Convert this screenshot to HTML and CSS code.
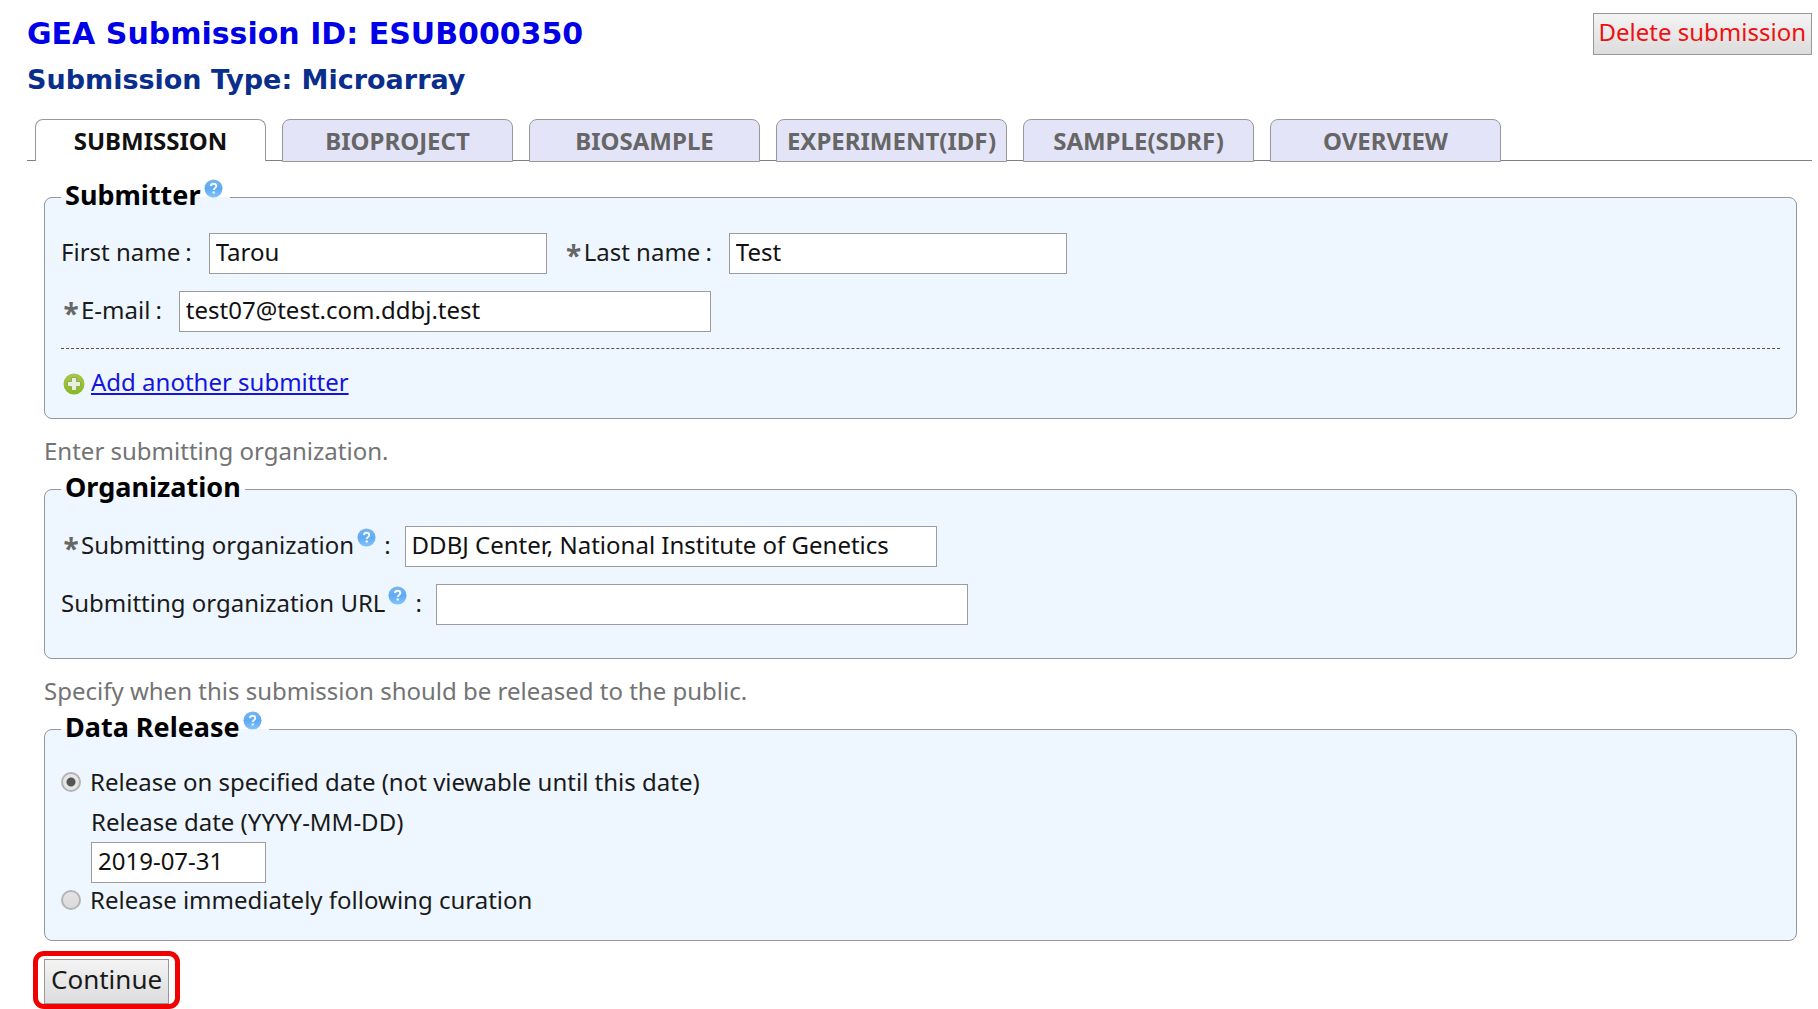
FILE: index.html
```html
<!DOCTYPE html>
<html lang="en">
<head>
<meta charset="utf-8">
<title>GEA Submission ESUB000350</title>
<link rel="stylesheet" href="styles.css">
</head>
<body>
<svg class="defs" width="0" height="0" aria-hidden="true">
  <defs>
    <linearGradient id="help-fill" x1="0" y1="0" x2="0" y2="1">
      <stop offset="0" stop-color="#7ab4ee"/>
      <stop offset="0.5" stop-color="#5faaf3"/>
      <stop offset="1" stop-color="#82c4fc"/>
    </linearGradient>
    <linearGradient id="add-fill" x1="0" y1="0" x2="0" y2="1">
      <stop offset="0" stop-color="#a9c552"/>
      <stop offset="1" stop-color="#86b91f"/>
    </linearGradient>
    <symbol id="icon-help" viewBox="0 0 20 20">
      <circle cx="10" cy="10" r="9.5" fill="url(#help-fill)"/>
      <path d="M7.2 7.6C7.4 5.8 8.5 5 10 5c1.700 0 2.900 1 2.900 2.500 0 1.900-2.700 2.300-2.700 4.200" fill="none" stroke="#f4faff" stroke-width="2"/>
      <circle cx="10.200" cy="14.300" r="1.300" fill="#f4faff"/>
    </symbol>
    <symbol id="icon-add" viewBox="0 0 22 22">
      <circle cx="11" cy="11" r="10.500" fill="url(#add-fill)"/>
      <path d="M8.500 4.500h5v4h4v5h-4v4h-5v-4h-4v-5h4z" fill="#e9efe0" stroke="#8fae4a" stroke-width="1"/>
    </symbol>
  </defs>
</svg>

<header class="page-header">
  <div>
    <h1 class="submission-id">GEA Submission ID: ESUB000350</h1>
    <h2 class="submission-type">Submission Type: Microarray</h2>
  </div>
  <button type="button" class="button button-delete">Delete submission</button>
</header>

<nav class="tabs">
  <a class="tab tab-active" href="#submission">SUBMISSION</a>
  <a class="tab" href="#bioproject">BIOPROJECT</a>
  <a class="tab" href="#biosample">BIOSAMPLE</a>
  <a class="tab" href="#experiment">EXPERIMENT(IDF)</a>
  <a class="tab" href="#sample">SAMPLE(SDRF)</a>
  <a class="tab" href="#overview">OVERVIEW</a>
</nav>

<form class="form">
  <fieldset class="panel">
    <legend class="panel-title">Submitter<svg class="help help-title"><use href="#icon-help"/></svg></legend>
    <div class="rows">
      <div class="row">
        <label class="label" for="first-name">First name<span class="colon">:</span></label>
        <input class="field field-name" id="first-name" type="text" value="Tarou">
        <label class="label label-next" for="last-name"><span class="required">*</span>Last name<span class="colon">:</span></label>
        <input class="field field-name" id="last-name" type="text" value="Test">
      </div>
      <div class="row">
        <label class="label" for="email"><span class="required">*</span>E-mail<span class="colon">:</span></label>
        <input class="field field-long" id="email" type="text" value="test07@test.com.ddbj.test">
      </div>
    </div>
    <div class="add-row">
      <svg class="add-icon" aria-hidden="true"><use href="#icon-add"/></svg>
      <a class="add-link" href="#add">Add another submitter</a>
    </div>
  </fieldset>

  <p class="hint">Enter submitting organization.</p>
  <fieldset class="panel">
    <legend class="panel-title">Organization</legend>
    <div class="rows rows-organization">
      <div class="row">
        <label class="label label-help" for="organization"><span class="required">*</span>Submitting organization<svg class="help"><use href="#icon-help"/></svg><span class="colon colon-wide">:</span></label>
        <input class="field field-long" id="organization" type="text" value="DDBJ Center, National Institute of Genetics">
      </div>
      <div class="row">
        <label class="label label-help" for="organization-url">Submitting organization URL<svg class="help"><use href="#icon-help"/></svg><span class="colon colon-wide">:</span></label>
        <input class="field field-long" id="organization-url" type="text">
      </div>
    </div>
  </fieldset>

  <p class="hint">Specify when this submission should be released to the public.</p>
  <fieldset class="panel">
    <legend class="panel-title">Data Release<svg class="help help-title"><use href="#icon-help"/></svg></legend>
    <div class="release">
      <label class="choice"><input class="radio" type="radio" name="release" checked>Release on specified date (not viewable until this date)</label>
      <div class="release-date">
        <label for="release-date">Release date (YYYY-MM-DD)</label>
        <input class="field field-date" id="release-date" type="text" value="2019-07-31">
      </div>
      <label class="choice"><input class="radio" type="radio" name="release">Release immediately following curation</label>
    </div>
  </fieldset>

  <div class="highlight">
    <button type="submit" class="button button-continue">Continue</button>
  </div>
</form>
</body>
</html>
```

FILE: styles.css
```css
* {
  box-sizing: border-box;
}

body {
  margin: 0;
  padding: 13px 6px 0 27px;
  background: #fff;
  color: #1a1a1a;
  font: 24px/32px "Noto Sans", "Open Sans", sans-serif;
}

.defs {
  position: absolute;
}

.page-header {
  display: flex;
  justify-content: space-between;
  align-items: flex-start;
}

.submission-id,
.submission-type {
  margin: 0;
  font-family: "DejaVu Sans", sans-serif;
}

.submission-id {
  color: #0000e6;
  font-size: 30px;
  line-height: 42px;
}

.submission-type {
  color: #0a2e8c;
  font-size: 27px;
  line-height: 50px;
}

.button {
  padding: 0 5px 5px;
  border: 1px solid #989898;
  background: linear-gradient(#f4f4f4, #dcdcdc);
  color: #1a1a1a;
  font-family: inherit;
  white-space: nowrap;
}

.button-delete {
  height: 42px;
  color: #ee1111;
  font-size: 24px;
}

.tabs {
  display: flex;
  gap: 16px;
  height: 42px;
  margin-top: 14px;
  padding-left: 8px;
  background: linear-gradient(#808080, #808080) 0 41px / 100% 1px no-repeat;
}

.tab {
  width: 231px;
  height: 43px;
  border: 1px solid #98989c;
  border-radius: 8px 8px 0 0;
  background: #e4e4f8;
  color: #666;
  font-size: 24px;
  font-weight: bold;
  line-height: 41px;
  text-align: center;
  text-decoration: none;
  white-space: nowrap;
}

.tab-active {
  border-bottom: 0;
  height: 42px;
  background: #fff;
  color: #111;
}

.form {
  padding: 18px 15px 0 17px;
}

.panel {
  min-width: 0;
  margin: 0;
  padding: 0 16px;
  border: 1px solid #94989c;
  border-radius: 8px;
  background: #eef7ff;
}

.panel-title {
  padding: 0 4px 4px;
  color: #000;
  font-size: 27px;
  font-weight: bold;
  line-height: 32px;
}

.help {
  width: 19px;
  height: 19px;
  margin: -6px 0 0 3px;
  vertical-align: 7px;
}

.help-title {
  margin-right: 3px;
}

.rows {
  display: flex;
  flex-direction: column;
  gap: 17px;
  padding: 18px 0 16px;
}

.rows-organization {
  padding: 19px 0 33px;
}

.row {
  display: flex;
  align-items: center;
}

.label {
  margin-right: 17px;
  padding-bottom: 3px;
  white-space: nowrap;
}

.label-next {
  margin-left: 17px;
}

.label-help {
  margin-right: 14px;
}

.required {
  display: inline-block;
  width: 20px;
  color: #666;
  font-size: 28px;
  font-weight: bold;
  line-height: 24px;
  text-align: center;
  vertical-align: -5px;
}

.colon {
  margin-left: 5px;
}

.colon-wide {
  margin-left: 8px;
}

.field {
  height: 41px;
  padding: 0 6px 5px;
  border: 1px solid #9c9c9c;
  border-radius: 0;
  background: #fff;
  color: #111;
  font: inherit;
}

.field-name {
  width: 338px;
}

.field-long {
  width: 532px;
}

.field-date {
  width: 175px;
}

.add-row {
  display: flex;
  align-items: center;
  gap: 6px;
  height: 70px;
  border-top: 1px dashed #555;
}

.add-icon {
  width: 22px;
  height: 22px;
  margin-left: 2px;
}

.add-link {
  padding-bottom: 3px;
  color: #1414dc;
}

.hint {
  margin: 16px 0 4px;
  color: #737373;
}

.release {
  padding: 18px 0 23px;
}

.choice {
  display: flex;
  align-items: center;
  gap: 9px;
  height: 34px;
}

.radio {
  appearance: none;
  width: 20px;
  height: 20px;
  margin: 0;
  border: 2px solid #b4b4b4;
  border-radius: 50%;
  background: linear-gradient(#e4e4e4, #dadada);
}

.radio:checked {
  background: radial-gradient(circle, #555 0 4px, #e6e6e6 5px);
}

.release-date {
  display: flex;
  flex-direction: column;
  align-items: flex-start;
  gap: 4px;
  padding: 7px 0 0 30px;
}

.highlight {
  width: fit-content;
  margin: 10px 0 0 -11px;
  padding: 3px 6px 0;
  border: 5px solid #f00000;
  border-radius: 11px;
}

.button-continue {
  display: block;
  height: 45px;
  padding: 0 6px 6px;
  font-size: 26px;
}
```
